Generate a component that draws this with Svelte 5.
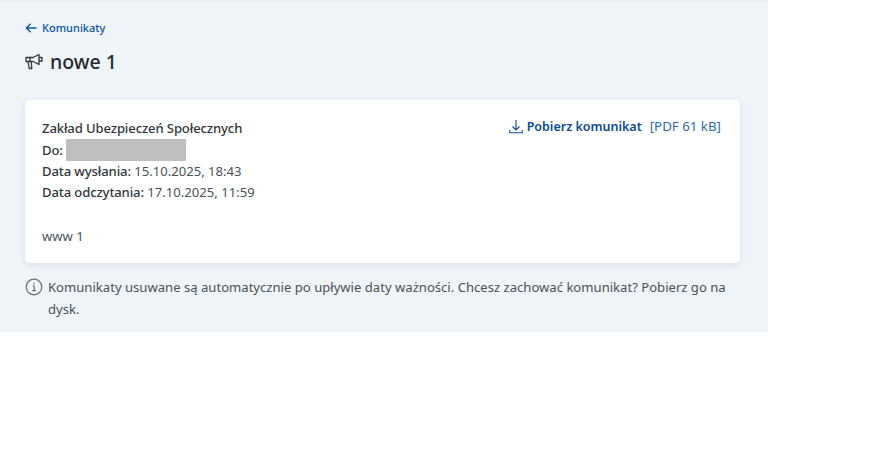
<script>
  const rows = [
    { label: 'Data wysłania:', value: '15.10.2025, 18:43' },
    { label: 'Data odczytania:', value: '17.10.2025, 11:59' }
  ];
</script>

<main class="page">
  <a class="back" href="#top">
    <svg width="12" height="12" viewBox="0 0 12 12" fill="none" stroke="currentColor" stroke-width="1.400"><path d="M11.500 6H1.500M5.600 1.800 1.400 6l4.200 4.200"/></svg>
    <span>Komunikaty</span>
  </a>
  <h1>
    <svg width="18" height="18" viewBox="0 0 18 18" fill="none" stroke="#33373b" stroke-width="1.300" stroke-linejoin="round"><path d="M1 4.500h7L14 1.500v10l-6-3H1zM3 8.500l1.200 7h2.600L6.200 8.500M14 4.500h3v3.500h-3M5 4.500v4"/></svg>
    <span>nowe 1</span>
  </h1>
  <section class="card">
    <div class="meta">
      <div class="strong">Zakład Ubezpieczeń Społecznych</div>
      <div class="strong do">Do: <i class="redact"></i></div>
      {#each rows as r}
        <div><span class="strong">{r.label}</span> {r.value}</div>
      {/each}
      <div class="body">www 1</div>
    </div>
    <div class="download">
      <svg width="14" height="16" viewBox="0 0 14 16" fill="none" stroke="currentColor" stroke-width="1.100"><path d="M7 1v9.500M3.500 7.500 7 11l3.500-3.500M.8 11v2.800h12.400V11"/></svg>
      <a href="#top">Pobierz komunikat</a>
      <span class="size">[PDF 61 kB]</span>
    </div>
  </section>
  <p class="note">
    <svg width="18" height="18" viewBox="0 0 18 18" fill="none" stroke="#6a6f75" stroke-width="1.200"><circle cx="9" cy="9" r="7.800"/><path d="M7.500 8h1.700v4.500M7.300 12.700h3.600M9 4.800v1.500"/></svg>
    <span>Komunikaty usuwane są automatycznie po upływie daty ważności. Chcesz zachować komunikat? Pobierz go na dysk.</span>
  </p>
</main>

<style>
  :global(body) { margin: 0; background: #fff; }
  .page {
    box-sizing: border-box;
    width: 768px;
    height: 332px;
    padding: 18px 25px 0;
    background: #eff4f9;
    border-top: 2px solid #e9eef5;
    font-family: "Noto Sans", "Open Sans", sans-serif;
    font-size: 13.100px;
    line-height: 22px;
    color: #4d5257;
  }
  .back {
    display: flex;
    align-items: center;
    gap: 5px;
    height: 16px;
    font-size: 11px;
    font-weight: 500;
    color: #0b55a0;
    text-decoration: none;
  }
  h1 {
    display: flex;
    align-items: center;
    gap: 7px;
    margin: 14px 0 26px;
    height: 24px;
    font-size: 19.500px;
    font-weight: 500;
    line-height: 24px;
    color: #26292d;
  }
  .card {
    box-sizing: border-box;
    display: flex;
    justify-content: space-between;
    height: 163px;
    margin-right: 3px;
    padding: 18px 19px 0 17px;
    background: #fff;
    border-radius: 5px;
    box-shadow: 0 2px 6px rgba(60, 90, 130, 0.12);
    line-height: 21.200px;
  }
  .strong { font-weight: 500; color: #33373b; letter-spacing: -0.13px; }
  .do { display: flex; align-items: center; gap: 3px; }
  .redact { width: 120px; height: 22px; background: #bfbfbf; }
  .body { margin-top: 22.500px; }
  .download {
    display: flex;
    align-items: center;
    align-self: flex-start;
    height: 18px;
    color: #0b4d92;
  }
  .download svg { margin-right: 4px; }
  .download a {
    font-weight: 600;
    font-size: 12.500px;
    color: #0b4d92;
    text-decoration: none;
  }
  .size { margin-left: 8px; color: #2f6cab; font-size: 13.300px; }
  .note {
    display: flex;
    gap: 5px;
    margin: 13px 0 0;
    color: #4d5257;
  }
  .note svg { flex: none; margin-top: 2px; }
</style>
